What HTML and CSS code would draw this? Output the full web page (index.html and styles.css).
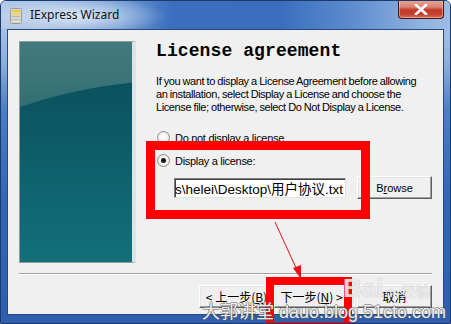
FILE: index.html
```
<!DOCTYPE html>
<html>
<head>
<meta charset="utf-8">
<link rel="stylesheet" href="styles.css">
</head>
<body>
<div class="window">
  <div class="titlebar">
    <svg class="app-icon" width="12" height="16" viewBox="0 0 12 16">
      <rect x="0.5" y="0.5" width="11" height="15" rx="1" fill="#d9d9d4" stroke="#9a9a92"/>
      <rect x="2" y="2" width="8" height="2" fill="#e8c838"/>
      <rect x="2" y="5" width="8" height="2" fill="#f0d850"/>
      <rect x="2" y="8" width="8" height="1" fill="#b8b8b0"/>
      <rect x="2" y="11" width="8" height="1" fill="#b8b8b0"/>
    </svg>
    <span class="title">IExpress Wizard</span>
    <div class="close">
      <svg width="14" height="11" viewBox="0 0 14 11"><path d="M2 1 L12 10 M12 1 L2 10" stroke="#ffffff" stroke-width="2.6" stroke-linecap="square"/></svg>
    </div>
  </div>
  <div class="client">
    <div class="top">
      <div class="banner"></div>
      <div class="content">
        <h1 class="heading">License agreement</h1>
        <p class="desc">If you want to display a License Agreement before allowing<br>an installation, select Display a License and choose the<br>License file; otherwise, select Do Not Display a License.</p>
        <div class="radio-row first"><span class="radio"></span><span><u>D</u>o not display a license</span></div>
        <div class="radio-row"><span class="radio checked"></span><span>Display a license:</span></div>
        <div class="file-row">
          <div class="textbox"><span>C:\Users\helei\Desktop\用户协议.txt</span></div>
          <div class="btn browse">B<u>r</u>owse</div>
        </div>
      </div>
    </div>
    <div class="separator"></div>
    <div class="buttons">
      <div class="btn cn">&lt; 上一步(<u>B</u>)</div>
      <div class="btn cn">下一步(<u>N</u>) &gt;</div>
      <div class="btn cn cancel">取消</div>
    </div>
  </div>
  <svg class="annotations" width="451" height="324" viewBox="0 0 451 324">
    <rect x="150.5" y="145.5" width="215" height="69" fill="none" stroke="#ff0000" stroke-width="9"/>
    <rect x="270" y="281" width="78" height="45" fill="none" stroke="#ff0000" stroke-width="8"/>
    <line x1="275" y1="222" x2="297" y2="270" stroke="#e81010" stroke-width="1"/>
    <polygon points="293,268 301,265 301,279" fill="#e81010"/>
  </svg>
  <div class="wm-baidu"><span class="bai">Bai</span><span class="paw">du</span><span class="jy">经验</span></div>
  <div class="wm-blog">大郭讲堂 dauo.blog.51cto.com</div>
</div>
</body>
</html>
```
FILE: styles.css
```
html, body {
  margin: 0;
  padding: 0;
  background: #ffffff;
}
.window {
  position: relative;
  width: 451px;
  height: 324px;
  box-sizing: border-box;
  border: 1px solid #1c3a6a;
  border-radius: 6px 6px 0 0;
  overflow: hidden;
  display: flex;
  flex-direction: column;
  background: linear-gradient(to bottom, #b7cde9 0px, #8fb0dc 60px, #4b7cc4 110px, #3465b3 200px, #2f5fac 324px);
}
.titlebar {
  height: 28px;
  display: flex;
  align-items: flex-start;
  background:
    radial-gradient(ellipse 90px 20px at 75px 15px, rgba(235,242,250,0.85), rgba(235,242,250,0) 100%),
    linear-gradient(to right, #b2c9e7 0px, #a4c0e4 30px, #6d97d2 120px, #3b6fbe 170px, #3a6ebd 280px, #5d8bcf 350px, #8fb3df 420px, #9dbde4 451px);
}
.app-icon {
  margin: 7px 0 0 9px;
  flex: none;
}
.title {
  margin: 6px 0 0 8px;
  font-family: "Noto Sans", sans-serif;
  font-size: 12px;
  line-height: 16px;
  color: #111;
}
.close {
  margin-left: auto;
  margin-right: 6px;
  margin-top: -1px;
  width: 46px;
  height: 19px;
  box-sizing: border-box;
  border: 1px solid #4a1710;
  border-top: none;
  border-radius: 0 0 4px 4px;
  background: linear-gradient(to bottom, #e8a898 0%, #d88070 40%, #c03a28 55%, #c24030 80%, #d87060 100%);
  box-shadow: inset 0 0 0 1px rgba(255,220,210,0.45);
  display: flex;
  align-items: center;
  justify-content: center;
}
.client {
  flex: 1;
  margin: 0 6px 8px 6px;
  border: 1px solid #27497f;
  background: #f0f0f0;
  padding: 11px 11px 0 11px;
  font-family: "Liberation Sans", Arial, sans-serif;
  font-size: 11px;
  color: #000;
}
.top {
  display: flex;
  height: 222px;
}
.banner {
  position: relative;
  width: 112px;
  height: 220px;
  flex: none;
  border: 1px solid #8f9c9d;
  border-right: 4px solid #dbe4e6;
  overflow: hidden;
  background: linear-gradient(to bottom, #427a7e 0px, #3a7478 40px, #2f6b70 70px);
}
.banner::before {
  content: "";
  position: absolute;
  left: -121px;
  top: 37px;
  width: 600px;
  height: 284px;
  border-radius: 50%;
  background: linear-gradient(to bottom, #0a525e 0px, #0c5965 50px, #0f6670 120px, #147079 190px);
}
.content {
  margin-left: 20px;
  display: flex;
  flex-direction: column;
  min-width: 0;
}
.heading {
  margin: 0;
  font-family: "Liberation Mono", "Courier New", monospace;
  font-weight: bold;
  font-size: 18px;
  line-height: 21px;
  letter-spacing: 0.1px;
}
.desc {
  margin: 13px 0 0 0;
  line-height: 13px;
  letter-spacing: -0.4px;
  word-spacing: -0.3px;
  white-space: nowrap;
}
.radio-row {
  display: flex;
  align-items: center;
  height: 13px;
  margin-top: 10px;
  margin-left: 1px;
  letter-spacing: -0.3px;
}
.radio-row.first {
  margin-top: 17px;
}
.radio {
  width: 13px;
  height: 13px;
  box-sizing: border-box;
  border-radius: 50%;
  border: 1px solid #8d8d8d;
  background: radial-gradient(circle at 50% 50%, #ffffff 0%, #f4f4f4 45%, #dcdcdc 100%);
  margin-right: 5px;
  position: relative;
  flex: none;
}
.radio.checked::after {
  content: "";
  position: absolute;
  left: 3px;
  top: 3px;
  width: 5px;
  height: 5px;
  border-radius: 50%;
  background: #1a1a1a;
}
.file-row {
  display: flex;
  align-items: center;
  margin-top: 9px;
  margin-left: 18px;
}
.textbox {
  width: 172px;
  height: 20px;
  box-sizing: border-box;
  border: 1px solid;
  border-color: #7f7f7f #e3e3e3 #e3e3e3 #7f7f7f;
  box-shadow: inset 1px 1px 0 #404040;
  background: #fff;
  overflow: hidden;
  display: flex;
  justify-content: flex-end;
  align-items: center;
  padding-right: 2px;
  font-family: "Liberation Sans", "Noto Sans CJK SC", sans-serif;
  font-size: 13.5px;
  white-space: nowrap;
}
.btn {
  width: 75px;
  height: 23px;
  box-sizing: border-box;
  border: 1px solid;
  border-color: #ffffff #5e5e5e #5e5e5e #ffffff;
  box-shadow: inset -1px -1px 0 #a0a0a0, inset 1px 1px 0 #e6e6e6;
  background: #f0f0f0;
  display: flex;
  align-items: center;
  justify-content: center;
  white-space: nowrap;
  flex: none;
}
.browse {
  margin-left: 11px;
  font-size: 11px;
}
.separator {
  margin-top: 10px;
  height: 1px;
  background: #a0a0a0;
  border-bottom: 1px solid #ffffff;
}
.buttons {
  display: flex;
  justify-content: flex-end;
  margin-top: 10px;
}
.btn.cn {
  font-family: "Noto Sans CJK SC", sans-serif;
  font-size: 12px;
}
.btn.cancel {
  margin-left: 8px;
}
.annotations {
  position: absolute;
  left: -1px;
  top: -1px;
  pointer-events: none;
}
.wm-baidu {
  position: absolute;
  left: 342px;
  top: 272px;
  display: flex;
  align-items: baseline;
  color: rgba(255,255,255,0.75);
  text-shadow: 0 0 1px rgba(120,120,120,0.6);
  font-family: "Liberation Sans", sans-serif;
}
.wm-baidu .bai {
  font-size: 26px;
  font-weight: bold;
}
.wm-baidu .paw {
  font-size: 12px;
  margin: 0 2px;
}
.wm-baidu .jy {
  font-family: "Noto Sans CJK SC", sans-serif;
  font-size: 15px;
}
.wm-blog {
  position: absolute;
  left: 201px;
  top: 300px;
  font-family: "Liberation Sans", "Noto Sans CJK SC", sans-serif;
  font-size: 18px;
  line-height: 22px;
  color: rgba(255,255,255,0.9);
  text-shadow: 1px 0 0 rgba(90,90,90,0.55), -1px 0 0 rgba(90,90,90,0.55), 0 1px 0 rgba(90,90,90,0.55), 0 -1px 0 rgba(90,90,90,0.55);
  white-space: nowrap;
}
```
